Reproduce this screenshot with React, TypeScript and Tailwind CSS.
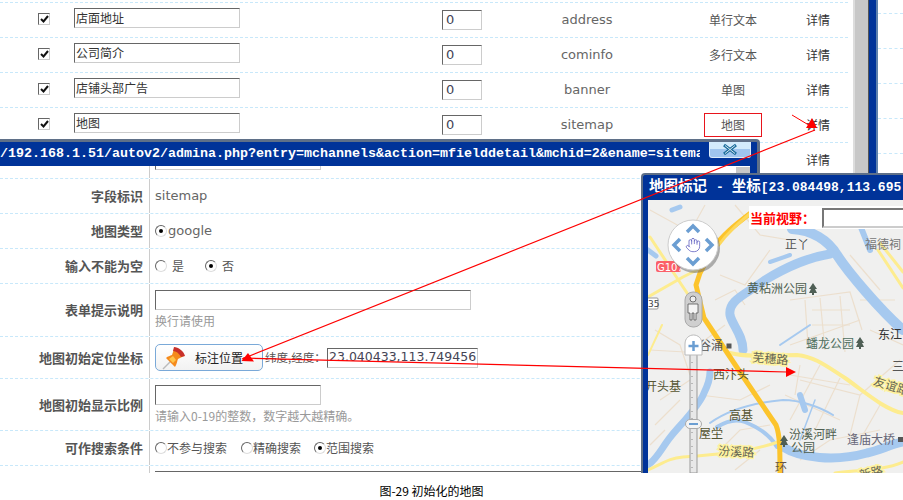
import { Hand } from 'lucide-react'

const cjk = "[font-family:'Noto_Sans_CJK_SC','Liberation_Sans',sans-serif]"
const latin = "[font-family:'DejaVu_Sans','Noto_Sans_CJK_SC',sans-serif]"
const mono = "[font-family:'Liberation_Mono','Noto_Sans_CJK_SC',monospace]"
const inset = 'border border-t-[#666] border-l-[#666] border-r-[#ccc] border-b-[#ccc] bg-white'

const fields = [
  { label: '店面地址', name: 'address', type: '单行文本' },
  { label: '公司简介', name: 'cominfo', type: '多行文本' },
  { label: '店铺头部广告', name: 'banner', type: '单图' },
  { label: '地图', name: 'sitemap', type: '地图' },
  { label: '', name: '', type: '' },
]

const minorRoads = [
  'M650 210 L690 232 L705 205', 'M735 205 L760 235 L790 240', 'M770 250 L745 285 L720 275', 'M655 330 L680 345 L690 375',
  'M650 350 L685 352', 'M660 400 L690 380', 'M700 395 L740 400 L770 385', 'M790 300 L850 292 L862 330',
  'M805 300 L808 345', 'M820 298 L825 350', 'M840 296 L845 352', 'M790 345 L860 320', 'M800 380 L860 395 L900 360',
  'M820 365 L790 420', 'M840 378 L815 430', 'M860 395 L850 435', 'M880 405 L860 440', 'M785 395 L840 420',
  'M800 460 L830 440 L880 430', 'M720 450 L740 430 L770 425', 'M850 255 L880 290', 'M870 330 L903 345', 'M655 425 L680 400',
  'M650 445 L665 430', 'M735 470 L760 450', 'M860 300 L895 300', 'M812 310 L850 310', 'M812 325 L850 325',
  'M790 375 L850 385', 'M800 365 L795 395', 'M715 300 L735 290 L745 305', 'M705 340 L725 325',
]

const mapLabels = [
  { x: 797, y: 249, t: '正丫', c: 'fill-[#555]' },
  { x: 883, y: 249, t: '福德祠', c: 'fill-[#777]' },
  { x: 777, y: 293, t: '黄粘洲公园', c: 'fill-[#4f5f50]' },
  { x: 890, y: 339, t: '东江', c: 'fill-[#333]' },
  { x: 830, y: 348, t: '蟠龙公园', c: 'fill-[#4f6f60]' },
  { x: 711, y: 350, t: '谷涌', c: 'fill-[#555]' },
  { x: 731, y: 379, t: '西汴头', c: 'fill-[#553]' },
  { x: 663, y: 391, t: '开头基', c: 'fill-[#553]' },
  { x: 741, y: 420, t: '高基', c: 'fill-[#553]' },
  { x: 711, y: 438, t: '屋坣', c: 'fill-[#553]' },
  { x: 813, y: 439, t: '汾溪河畔', c: 'fill-[#4f5f50]' },
  { x: 803, y: 452, t: '公园', c: 'fill-[#4f5f50]' },
  { x: 871, y: 444, t: '逢庙大桥', c: 'fill-[#667]' },
  { x: 898, y: 371, t: '三', c: 'fill-[#555]' },
]

const roadLabels = [
  { x: 770, y: 363, t: '芜穗路', r: 5 },
  { x: 736, y: 456, t: '汾溪路', r: 3 },
  { x: 890, y: 390, t: '友谊路', r: 18 },
  { x: 872, y: 477, t: '新路', r: -12 },
]

function Checkbox() {
  return (
    <span className={`flex h-[12px] w-[12px] items-center justify-center ${inset}`}>
      <svg width="9" height="8" viewBox="0 0 9 8">
        <path d="M1 4 L3.5 6.5 L8 1" fill="none" stroke="#111" strokeWidth="2" />
      </svg>
    </span>
  )
}

function Radio({ checked }: { checked?: boolean }) {
  return (
    <span className="flex h-[12px] w-[12px] shrink-0 items-center justify-center rounded-full border border-t-[#666] border-l-[#666] border-r-[#ddd] border-b-[#ddd] bg-white">
      {checked && <span className="h-[4px] w-[4px] rounded-full bg-black" />}
    </span>
  )
}

function FormRow({ label, height, children }: { label: string; height: string; children: React.ReactNode }) {
  return (
    <div className={`flex ${height} border-b border-dashed border-[#c8e8fa]`}>
      <div className={`flex w-[150px] shrink-0 items-center justify-end border-r border-[#ccc] pr-[6px] text-[13px] font-bold text-[#555] ${cjk}`}>
        {label}
      </div>
      <div className={`flex flex-col justify-center pl-[5px] text-[12px] text-[#555] ${cjk}`}>{children}</div>
    </div>
  )
}

function PushPin() {
  return (
    <svg width="24" height="24" viewBox="0 0 24 24">
      <path d="M1 23 L9 15" stroke="#bbb" strokeWidth="1.5" />
      <path d="M4 12 C6 10 8 10 10 9 L12 3 L22 10 L16 13 C15 15 15 18 13 21 Z" fill="#f58a1c" />
      <path d="M12 1 C16 1 22 5 23 10 L19 11 C17 7 14 5 11 5 Z" fill="#c8302a" />
      <path d="M7 13 L11 10 L14 14 L11 17 Z" fill="#ffc54a" />
    </svg>
  )
}

function MapCanvas() {
  return (
    <svg className="h-full w-full" viewBox="648 200 255 273">
      <rect x="648" y="200" width="255" height="273" fill="#f0f0ef" />
      {minorRoads.map((d, i) => (
        <path key={i} d={d} fill="none" stroke="#ecdfce" strokeWidth="1.2" />
      ))}
      {/* rivers */}
      <g fill="none" stroke="#a6c9ef" strokeLinecap="round">
        <path d="M792 229 C812 230 828 240 837 255 C848 272 880 310 903 330" strokeWidth="10" />
        <path d="M830 254 C805 258 785 268 765 280 C745 295 728 300 730 315 C732 325 743 335 743 350" strokeWidth="9" />
        <path d="M860 225 L870 250" strokeWidth="6" />
        <path d="M770 262 L790 255" strokeWidth="4" />
        <path d="M648 465 C658 458 662 447 672 435 C682 423 700 405 704 393 C708 385 710 380 710 372" strokeWidth="7" />
        <path d="M710 423 C725 412 750 403 783 400 C800 400 820 407 833 415" strokeWidth="2" />
        <path d="M717 427 C725 422 735 418 745 422 C760 428 770 435 777 447" strokeWidth="4" />
        <path d="M783 447 C800 458 835 462 867 453 C880 450 892 444 903 442" strokeWidth="9" />
        <path d="M648 250 L656 256" strokeWidth="5" />
        <path d="M672 210 L680 207" strokeWidth="5" />
        <path d="M800 395 L805 410" strokeWidth="6" />
        <path d="M810 325 L780 345" strokeWidth="2" />
        <path d="M815 400 L800 440" strokeWidth="1.5" />
      </g>
      {/* roads */}
      <g fill="none" stroke="#fdec8f" strokeLinecap="round" strokeLinejoin="round">
        <path d="M650 237 L683 287 L700 312" strokeWidth="3" />
        <path d="M648 297 L683 277 L697 270" strokeWidth="3" />
        <path d="M730 353 C750 358 775 355 797 355 C815 357 825 365 845 378 C865 392 885 410 903 413" strokeWidth="4" />
        <path d="M648 470 C665 462 670 458 683 457 C710 455 750 452 778 442" strokeWidth="3" />
        <path d="M880 243 L903 272" strokeWidth="3" />
        <path d="M878 250 L903 288" strokeWidth="3" />
        <path d="M835 473 C860 470 885 470 903 462" strokeWidth="3" />
        <path d="M648 355 L662 325" strokeWidth="2" />
      </g>
      <path
        d="M752 212 C735 225 722 235 712 250 L700 273 L696 285 L704 318 L744 378 L776 425 C780 435 780 450 780 473"
        fill="none"
        stroke="#fcc42c"
        strokeWidth="5"
        strokeLinejoin="round"
      />
      <path d="M752 212 C740 222 728 232 718 246" fill="none" stroke="#fdd85c" strokeWidth="3" />
      {/* map text */}
      {mapLabels.map(l => (
        <text key={l.t} x={l.x} y={l.y} textAnchor="middle" className={`text-[12px] ${l.c} ${cjk}`}>
          {l.t}
        </text>
      ))}
      {roadLabels.map(l => (
        <text
          key={l.t}
          x={l.x}
          y={l.y}
          textAnchor="middle"
          transform={`rotate(${l.r} ${l.x} ${l.y})`}
          stroke="#fff3a0"
          strokeWidth="3"
          paintOrder="stroke"
          className={`fill-[#665] text-[12px] ${cjk}`}
        >
          {l.t}
        </text>
      ))}
      <rect x="726.5" y="343.5" width="5" height="5" fill="#555" />
      <rect x="898" y="437" width="5" height="5" fill="#555" />
      <text x="781" y="472" textAnchor="middle" className={`fill-[#654] text-[12px] ${cjk}`}>环</text>
      {/* trees */}
      {[[813, 289], [860, 343], [784, 441]].map(([x, y]) => (
        <path key={x} d={`M${x} ${y - 6} L${x + 4} ${y} L${x + 2} ${y} L${x + 4} ${y + 4} L${x + 1} ${y + 4} L${x + 1} ${y + 6} L${x - 1} ${y + 6} L${x - 1} ${y + 4} L${x - 4} ${y + 4} L${x - 2} ${y} L${x - 4} ${y} Z`} fill="#4f5f55" />
      ))}
      {/* shields */}
      <rect x="656" y="261" width="25" height="11" rx="2" fill="#fb6068" />
      <text x="657" y="270.5" className={`fill-white text-[10px] ${latin}`}>G107</text>
      <rect x="646" y="298" width="12" height="11" rx="1" fill="#fff" stroke="#999" />
      <text x="648" y="307" className={`fill-[#444] text-[9px] ${latin}`}>35</text>
      {/* pan control */}
      <circle cx="695" cy="248" r="25" fill="#666" opacity="0.5" />
      <circle cx="693" cy="245" r="25" fill="#fff" stroke="#ccc" />
      <g fill="none" stroke="#6b9ed2" strokeWidth="3.5">
        <path d="M687 232 L693 226 L699 232" />
        <path d="M687 258 L693 264 L699 258" />
        <path d="M680 239 L674 245 L680 251" />
        <path d="M706 239 L712 245 L706 251" />
      </g>
      {/* pegman */}
      <rect x="685" y="292" width="17" height="35" rx="8" fill="#cfcfcf" stroke="#aaa" />
      <circle cx="693" cy="299" r="3" fill="#eee" stroke="#555" strokeWidth="0.8" />
      <path d="M688 304 H698 V313 H696 V320 H694 V313 H692 V320 H690 V313 H688 Z" fill="#f4f4f4" stroke="#555" strokeWidth="0.8" />
      {/* zoom control */}
      <rect x="690" y="352" width="7" height="121" fill="#e8e8e8" stroke="#999" />
      <path d="M692 362 V473" stroke="#888" strokeWidth="1" strokeDasharray="1 6" />
      <path d="M685 355 V344 C685 332 702 332 702 344 V355 Z" fill="#fff" stroke="#bbb" />
      <path d="M693.5 341 V351 M688.5 346 H698.5" stroke="#6b9ed2" strokeWidth="2.5" />
      <rect x="685.5" y="419.5" width="16" height="9" rx="4.5" fill="#f4f4f4" stroke="#aaa" />
      <path d="M689 424 H698" stroke="#6b9ed2" strokeWidth="2" />
    </svg>
  )
}

export default function App() {
  return (
    <div className={`relative h-[500px] w-[903px] overflow-hidden bg-white text-[12px] ${cjk}`}>
      <div className="flex h-[473px] overflow-hidden">
        {/* field list behind the popups */}
        <div className="w-[848px] shrink-0 pt-[2px]">
          <div className="border-b border-dashed border-[#c8e8fa]" />
          {fields.map((f, i) => (
            <div key={i} className="flex h-[35px] items-center border-b border-dashed border-[#c8e8fa]">
              <div className="w-[38px]" />
              <div className="mb-[2px] w-[36px]">
                <Checkbox />
              </div>
              <div className={`mb-[4px] flex h-[20px] w-[166px] items-center pl-[1px] text-[12px] text-[#333] ${inset}`}>{f.label}</div>
              <div className="w-[202px]" />
              <div className={`flex h-[20px] w-[40px] items-center pl-[3px] text-[13px] text-[#445] ${latin} ${inset}`}>0</div>
              <div className={`w-[210px] text-center text-[13px] text-[#666] ${latin}`}>{f.name}</div>
              <div className="flex w-[82px] justify-center text-[#555]">
                <span className={f.name === 'sitemap' ? 'flex h-[24px] w-[58px] items-center justify-center border border-[#e8141c]' : ''}>{f.type}</span>
              </div>
              <div className="w-[14px]" />
              <div className="w-[60px] text-center text-[#333]">详情</div>
            </div>
          ))}
        </div>
        <div className="ml-[5px] w-[2px] shrink-0 bg-[#ddd]" />
        <div className="w-[13px] shrink-0 bg-[#c8c8c8]" />
        <div className="w-[1px] shrink-0 bg-[#555]" />
        <div className="w-[7px] shrink-0 bg-[#003399]" />
        <div className="w-[2px] shrink-0 bg-[#5f82ad]" />
        <div className="flex-1 pt-[13px]">
          {fields.map((_, i) => (
            <div key={i} className="h-[35px] border-t border-dashed border-[#c8e8fa]" />
          ))}
        </div>
      </div>

      <div className={`flex h-[27px] items-start justify-center pt-[9px] pr-[40px] text-[12px] text-black ${cjk}`}>图-29 初始化的地图</div>

      {/* field detail popup */}
      <div className="absolute left-0 top-[139px] h-[334px] w-[760px] overflow-hidden rounded-tr-[4px] border-t-[3px] border-r-[3px] border-[#5f7088] bg-[#003399]">
        <div className="relative flex h-[24px] items-center">
          <div className={`w-[700px] overflow-hidden whitespace-nowrap text-[13.33px] font-bold text-white ${mono}`}>
            /192.168.1.51/autov2/admina.php?entry=mchannels&amp;action=mfielddetail&amp;mchid=2&amp;ename=sitema
          </div>
          <div className="absolute right-[6px] top-0 flex h-[16px] w-[42px] items-center justify-center rounded-b-[3px] border border-t-0 border-[#dcecfa] bg-gradient-to-b from-[#d3ebfc] from-50% to-[#9fc5ee] to-50%">
            <svg width="16" height="13" viewBox="0 0 16 13">
              <path d="M2 2 L14 11 M14 2 L2 11" stroke="#1d6f9e" strokeWidth="3.2" />
              <path d="M3 2.5 L13 10.5 M13 2.5 L3 10.5" stroke="#fff" strokeWidth="0.8" />
            </svg>
          </div>
        </div>
        <div className="relative mr-[7px] h-[307px] overflow-hidden bg-white">
          <div className="absolute right-0 top-[1px] h-[6px] w-[14px] bg-[#c8c8c8]" />
          <div className="flex h-[13px] overflow-hidden border-b border-dashed border-[#c8e8fa]">
            <div className="w-[150px] shrink-0 border-r border-[#ccc]" />
            <div className={`ml-[5px] mt-[-16px] h-[20px] w-[166px] shrink-0 ${inset}`} />
          </div>
          <FormRow label="字段标识" height="h-[35px]">
            <span className={`text-[13px] text-[#666] ${latin}`}>sitemap</span>
          </FormRow>
          <FormRow label="地图类型" height="h-[35px]">
            <div className="flex items-center gap-[1px]">
              <Radio checked />
              <span className={`text-[13px] text-[#666] ${latin}`}>google</span>
            </div>
          </FormRow>
          <FormRow label="输入不能为空" height="h-[35px]">
            <div className="flex items-center">
              <Radio />
              <span className="ml-[5px] w-[33px]">是</span>
              <Radio checked />
              <span className="ml-[5px]">否</span>
            </div>
          </FormRow>
          <FormRow label="表单提示说明" height="h-[53px]">
            <div className={`h-[20px] w-[316px] ${inset}`} />
            <span className="mt-[2px] text-[#999]">换行请使用</span>
          </FormRow>
          <FormRow label="地图初始定位坐标" height="h-[42px]">
            <div className="flex items-center">
              <div className="flex h-[27px] w-[108px] shrink-0 items-center rounded-[5px] border border-[#7aa9d8] bg-gradient-to-b from-white to-[#f2f2f2] pl-[6px] text-[#222]">
                <PushPin />
                <span className="ml-[9px]">标注位置</span>
              </div>
              <span className="w-[64px] shrink-0 whitespace-nowrap pl-[2px] text-[11.5px]">纬度,经度：</span>
              <div className={`flex h-[20px] w-[151px] shrink-0 items-center overflow-hidden whitespace-nowrap pl-[1px] text-[12.5px] text-[#445] ${latin} ${inset}`}>23.040433,113.749456</div>
            </div>
          </FormRow>
          <FormRow label="地图初始显示比例" height="h-[52px]">
            <div className={`h-[20px] w-[166px] ${inset}`} />
            <span className="mt-[2px] text-[#999]">请输入0-19的整数，数字越大越精确。</span>
          </FormRow>
          <FormRow label="可作搜索条件" height="h-[35px]">
            <div className="flex items-center">
              <Radio />
              <span className="w-[74px]">不参与搜索</span>
              <Radio />
              <span className="w-[61px]">精确搜索</span>
              <Radio checked />
              <span>范围搜索</span>
            </div>
          </FormRow>
          <div className="flex h-[8px]">
            <div className="w-[150px] shrink-0 border-r border-[#ccc]" />
            <div className="ml-[5px] mt-[5px] h-[20px] w-[600px] shrink-0 border-t border-[#666]" />
          </div>
        </div>
      </div>

      {/* map marker popup */}
      <div className="absolute left-[641px] top-[173px] h-[300px] w-[262px] overflow-hidden rounded-tl-[4px] border-l-[2px] border-t-[2px] border-[#5f7088] bg-[#003399]">
        <div className={`flex h-[25px] items-center whitespace-nowrap pl-[6px] text-[13px] font-bold text-white ${mono}`}>
          <span className="text-[14.5px]">地图标记</span>
          <span className="ml-[9px]">- </span>
          <span className="ml-[8px] text-[14.5px]">坐标</span>
          <span>[23.084498,113.695</span>
        </div>
        <div className="relative ml-[5px] h-[273px] overflow-hidden">
          <MapCanvas />
          <div className={`absolute left-[101px] top-[6px] flex h-[23px] w-[160px] items-center whitespace-nowrap bg-white pl-[1px] text-[13px] font-bold text-[#f00] ${cjk}`}>
            当前视野：
            <div className="ml-[7px] h-[20px] w-[90px] border-2 border-[#777] border-b-[#ccc] border-r-0 bg-white" />
          </div>
          <Hand className="absolute left-[37px] top-[37px] text-[#5f5fc0]" size={16} strokeWidth={1.2} />
        </div>
      </div>

      {/* red annotation arrows */}
      <svg className="pointer-events-none absolute left-0 top-0" width="903" height="500">
        <path d="M815 130 L242 359" stroke="#f00" strokeWidth="1.2" fill="none" />
        <path d="M792 115 L812 127" stroke="#f00" strokeWidth="1" fill="none" />
        <path d="M806 128 L817 128 L812 118 Z" fill="#f00" />
        <path d="M241.5 361 L254 361.5 L248 353 Z" fill="#f00" />
        <path d="M243 358 L787 372" stroke="#f00" strokeWidth="1.2" fill="none" />
        <path d="M786 367 L796 372 L786 377 Z" fill="#f00" />
      </svg>
    </div>
  )
}
